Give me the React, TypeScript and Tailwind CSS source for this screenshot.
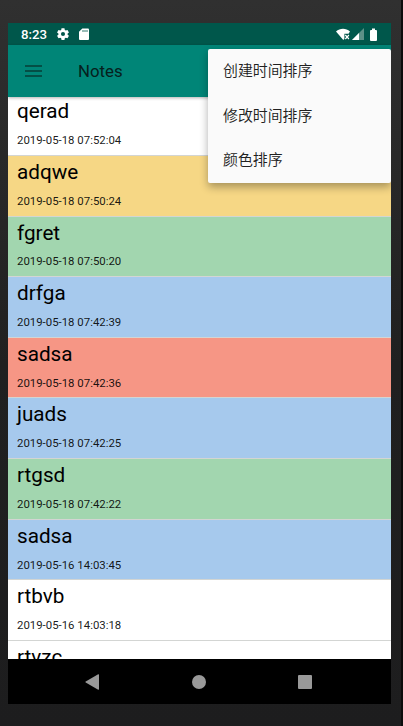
const notes = [
  { title: "qerad", date: "2019-05-18 07:52:04", color: "bg-white" },
  { title: "adqwe", date: "2019-05-18 07:50:24", color: "bg-[#f6d785]" },
  { title: "fgret", date: "2019-05-18 07:50:20", color: "bg-[#a2d6af]" },
  { title: "drfga", date: "2019-05-18 07:42:39", color: "bg-[#a6c9ed]" },
  { title: "sadsa", date: "2019-05-18 07:42:36", color: "bg-[#f69685]" },
  { title: "juads", date: "2019-05-18 07:42:25", color: "bg-[#a6c9ed]" },
  { title: "rtgsd", date: "2019-05-18 07:42:22", color: "bg-[#a2d6af]" },
  { title: "sadsa", date: "2019-05-16 14:03:45", color: "bg-[#a6c9ed]" },
  { title: "rtbvb", date: "2019-05-16 14:03:18", color: "bg-white" },
  { title: "rtvzc", date: "", color: "bg-white" },
];

const menuItems = ["创建时间排序", "修改时间排序", "颜色排序"];

function StatusBar() {
  return (
    <div className="flex h-[22px] shrink-0 items-center bg-[#00574b] px-[13px] text-white">
      <span className="w-[27px] pt-px text-[13.2px] font-medium leading-none">8:23</span>
      <svg className="ml-[8px] size-[14px]" viewBox="0 0 24 24" fill="currentColor">
        <path
          fillRule="evenodd"
          d="M9.500 2h5l.6 3 1.700 1 2.900-1 2.500 4.300-2.300 2v1.800l2.300 2-2.500 4.300-2.900-1-1.700 1-.6 3h-5l-.6-3-1.700-1-2.900 1-2.500-4.300 2.300-2v-1.800l-2.300-2L4.300 5l2.900 1 1.700-1zM12 8.600a3.500 3.500 0 1 0 0 7 3.500 3.500 0 0 0 0-7z"
        />
      </svg>
      <svg className="ml-[9px] h-[12px] w-[10px]" viewBox="0 0 10 12">
        <path fill="currentColor" d="M3.300.500H9Q10 .500 10 1.500V11Q10 12 9 12H1Q0 12 0 11V3.800z" />
        <path stroke="#00574b" d="M4 2v2M6 2v2M8 2v2" strokeWidth=".8" />
      </svg>
      <svg className="ml-auto h-[13px] w-[14px]" viewBox="0 0 14 13">
        <path fill="currentColor" d="M0 3.600C4-.100 10-.100 14 3.600L12.500 5.700H8.400v5L7.300 12z" />
        <path fill="none" stroke="currentColor" strokeWidth="1.200" d="m9.300 7 3.600 4m0-4-3.600 4" />
      </svg>
      <svg className="ml-[2px] size-[12px]" viewBox="0 0 12 12">
        <path fill="#5c9187" d="M12 0v12H0z" />
        <path fill="currentColor" d="M7 5v7H0z" />
      </svg>
      <svg className="ml-[6px] mr-px h-[13px] w-[7px]" viewBox="0 0 7 13">
        <path fill="currentColor" d="M2 .500h3V2h1q1 0 1 1v9q0 1-1 1H1q-1 0-1-1V3q0-1 1-1h1z" />
      </svg>
    </div>
  );
}

function SortMenu() {
  return (
    <div className="absolute right-0 top-[25.5px] z-20 flex h-[134px] w-[183px] flex-col rounded-[2px] bg-[#fafafa] shadow-[0_4px_8px_rgba(0,0,0,0.32)]">
      {menuItems.map((item) => (
        <div
          key={item}
          className="flex flex-1 items-center pb-[0.5px] pl-[15px] font-['Noto_Sans_CJK_SC',sans-serif] text-[14.9px] font-[350] leading-none text-[#202020]"
        >
          {item}
        </div>
      ))}
    </div>
  );
}

export default function App() {
  return (
    <div className="h-[726px] w-[403px] overflow-hidden border-r-2 border-[#0c0c0c] bg-linear-to-b from-[#303030] via-[#202020] to-[#1d1d1e] pl-2 pt-[23px] font-[Roboto,sans-serif]">
      <div className="relative flex h-[681px] w-[383px] flex-col overflow-hidden bg-white">
        <StatusBar />
        <header className="z-10 flex h-[52px] shrink-0 items-center bg-[#008577] pl-[17px] shadow-[0_1px_3px_rgba(0,0,0,0.3)]">
          <svg className="h-[12px] w-[17px]" viewBox="0 0 17 12">
            <path stroke="#063e37" strokeWidth="1.500" d="M0 1h17M0 6h17M0 11h17" />
          </svg>
          <h1 className="ml-[36px] text-[16.8px] leading-none text-[#06201d]">Notes</h1>
        </header>
        <main className="min-h-0 flex-1 overflow-hidden">
          <div className="-mt-[1.8px]">
            {notes.map((note, index) => (
              <article
                key={index}
                className={`flex h-[60.67px] flex-col border-b border-[#d3d5d3] pl-[9px] ${note.color}`}
              >
                <h2 className="mt-[4px] text-[20.7px] leading-[25px] text-black">{note.title}</h2>
                {note.date && (
                  <time className="mt-[8.8px] text-[11.4px] leading-[14px] text-black/90">{note.date}</time>
                )}
              </article>
            ))}
          </div>
        </main>
        <nav className="flex h-[45px] shrink-0 items-center bg-black">
          <svg className="ml-[77px] h-[16px] w-[15px]" viewBox="0 0 15 16" fill="#999">
            <path d="M13.200.300Q14 0 14 1v14q0 1-.8.700L.700 8.600q-.7-.5 0-1z" />
          </svg>
          <div className="ml-[92px] size-[14px] rounded-full bg-[#999]" />
          <div className="ml-[92px] size-[14px] rounded-[1px] bg-[#999]" />
        </nav>
        <SortMenu />
      </div>
    </div>
  );
}
